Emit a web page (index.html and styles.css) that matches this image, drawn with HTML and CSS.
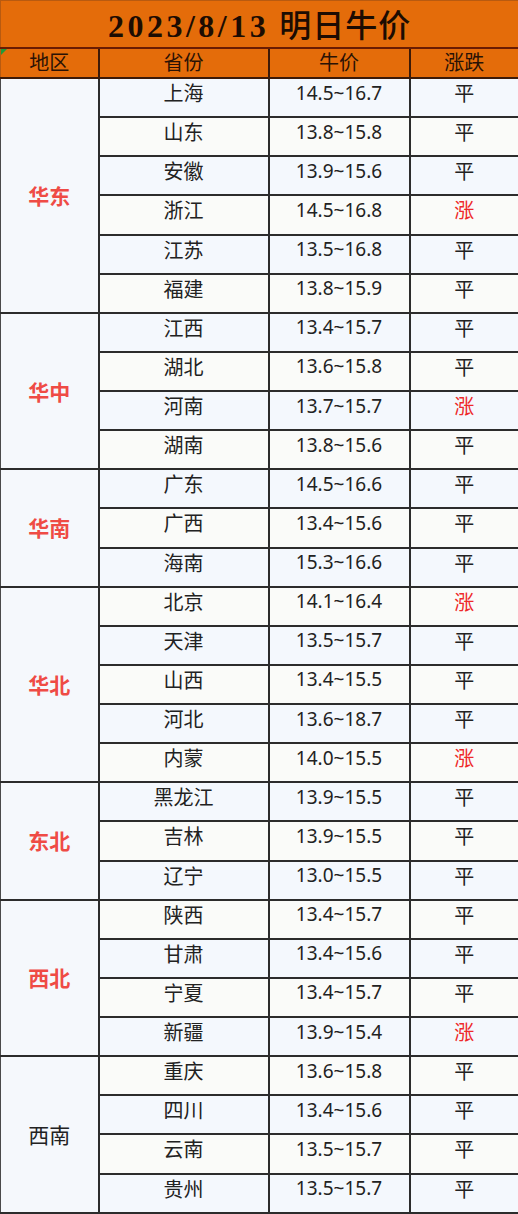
FILE: index.html
```html
<!DOCTYPE html>
<html lang="zh">
<head>
<meta charset="utf-8">
<title>2023/8/13 明日牛价</title>
<link rel="stylesheet" href="styles.css">
</head>
<body>
<table class="sheet">
  <colgroup>
    <col class="c-region"><col class="c-prov"><col class="c-price"><col class="c-trend">
  </colgroup>
  <thead>
    <tr class="title-row"><th colspan="4" class="title"><span class="date">2023/8/13</span> <span class="cn">明日牛价</span></th></tr>
    <tr class="head-row">
      <th class="first"><span class="flag"></span>地区</th><th>省份</th><th>牛价</th><th>涨跌</th>
    </tr>
  </thead>
  <tbody>
    <tr class="r"><td class="region red" rowspan="6">华东</td><td>上海</td><td class="num">14.5~16.7</td><td>平</td></tr>
    <tr class="r alt"><td>山东</td><td class="num">13.8~15.8</td><td>平</td></tr>
    <tr class="r"><td>安徽</td><td class="num">13.9~15.6</td><td>平</td></tr>
    <tr class="r alt"><td>浙江</td><td class="num">14.5~16.8</td><td class="up">涨</td></tr>
    <tr class="r"><td>江苏</td><td class="num">13.5~16.8</td><td>平</td></tr>
    <tr class="r alt"><td>福建</td><td class="num">13.8~15.9</td><td>平</td></tr>

    <tr class="r"><td class="region red" rowspan="4">华中</td><td>江西</td><td class="num">13.4~15.7</td><td>平</td></tr>
    <tr class="r alt"><td>湖北</td><td class="num">13.6~15.8</td><td>平</td></tr>
    <tr class="r"><td>河南</td><td class="num">13.7~15.7</td><td class="up">涨</td></tr>
    <tr class="r alt"><td>湖南</td><td class="num">13.8~15.6</td><td>平</td></tr>

    <tr class="r"><td class="region red" rowspan="3">华南</td><td>广东</td><td class="num">14.5~16.6</td><td>平</td></tr>
    <tr class="r alt"><td>广西</td><td class="num">13.4~15.6</td><td>平</td></tr>
    <tr class="r"><td>海南</td><td class="num">15.3~16.6</td><td>平</td></tr>

    <tr class="r alt"><td class="region red" rowspan="5">华北</td><td>北京</td><td class="num">14.1~16.4</td><td class="up">涨</td></tr>
    <tr class="r"><td>天津</td><td class="num">13.5~15.7</td><td>平</td></tr>
    <tr class="r alt"><td>山西</td><td class="num">13.4~15.5</td><td>平</td></tr>
    <tr class="r"><td>河北</td><td class="num">13.6~18.7</td><td>平</td></tr>
    <tr class="r alt"><td>内蒙</td><td class="num">14.0~15.5</td><td class="up">涨</td></tr>

    <tr class="r"><td class="region red" rowspan="3">东北</td><td>黑龙江</td><td class="num">13.9~15.5</td><td>平</td></tr>
    <tr class="r alt"><td>吉林</td><td class="num">13.9~15.5</td><td>平</td></tr>
    <tr class="r"><td>辽宁</td><td class="num">13.0~15.5</td><td>平</td></tr>

    <tr class="r alt"><td class="region red" rowspan="4">西北</td><td>陕西</td><td class="num">13.4~15.7</td><td>平</td></tr>
    <tr class="r"><td>甘肃</td><td class="num">13.4~15.6</td><td>平</td></tr>
    <tr class="r alt"><td>宁夏</td><td class="num">13.4~15.7</td><td>平</td></tr>
    <tr class="r"><td>新疆</td><td class="num">13.9~15.4</td><td class="up">涨</td></tr>

    <tr class="r alt"><td class="region" rowspan="4">西南</td><td>重庆</td><td class="num">13.6~15.8</td><td>平</td></tr>
    <tr class="r"><td>四川</td><td class="num">13.4~15.6</td><td>平</td></tr>
    <tr class="r alt"><td>云南</td><td class="num">13.5~15.7</td><td>平</td></tr>
    <tr class="r"><td>贵州</td><td class="num">13.5~15.7</td><td>平</td></tr>
  </tbody>
</table>
</body>
</html>
```

FILE: styles.css
```css
html, body {
  margin: 0;
  padding: 0;
  background: #ffffff;
}

.sheet {
  width: 518px;
  border-collapse: collapse;
  table-layout: fixed;
  font-family: "Noto Sans", "Noto Sans CJK SC", sans-serif;
  color: #1e1e1e;
}

.c-region { width: 98px; }
.c-prov { width: 170px; }
.c-price { width: 141px; }
.c-trend { width: 109px; }

.title {
  height: 42px;
  padding: 4px 0 0 0;
  background: #e46c0a;
  border: 1px solid #b85a10;
  border-bottom: 2px solid #6a1c02;
  font-family: "Liberation Serif", "Noto Sans CJK SC", serif;
  font-size: 32px;
  font-weight: 700;
  color: #1c0c02;
  text-align: center;
  vertical-align: middle;
  line-height: 1;
}

.date {
  letter-spacing: 3.5px;
  margin-right: 2px;
}

.cn {
  font-weight: 500;
  letter-spacing: 1px;
}

.head-row th {
  height: 26px;
  padding: 0 0 2px 0;
  background: #e46c0a;
  border: 2px solid #3d1a08;
  border-top: 0;
  font-family: "Noto Sans CJK SC", sans-serif;
  font-size: 20px;
  font-weight: 400;
  color: #2a1205;
  text-align: center;
  vertical-align: middle;
  line-height: 1;
}

.head-row th.first {
  position: relative;
  border-left: 1px solid #b85a10;
}

.head-row th:last-child {
  border-right: 1px solid #b85a10;
}

.flag {
  position: absolute;
  left: 0;
  top: 0;
  width: 0;
  height: 0;
  border-top: 6px solid #1f9b3a;
  border-right: 6px solid transparent;
}

.r td {
  height: 28.14px;
  padding: 0 0 9px 0;
  background: #f4f8fd;
  border: 2px solid #2c2c2c;
  font-family: "Noto Sans CJK SC", sans-serif;
  font-size: 20px;
  color: #222222;
  text-align: center;
  vertical-align: middle;
  line-height: 1;
}

.r.alt td {
  background: #fafbf9;
}

.r td.num {
  font-family: "Noto Sans", "Noto Sans CJK SC", sans-serif;
  font-size: 19px;
}

.r td.region {
  background: #f5f8fc;
  padding: 0;
  font-size: 21px;
  border-left: 1px solid #4a4a4a;
}

.r td.region.red {
  color: #ef4b45;
  font-weight: 700;
}

.r td:last-child {
  border-right: 1px solid #4a4a4a;
}

.r td.up {
  color: #ee2a2a;
}
```
